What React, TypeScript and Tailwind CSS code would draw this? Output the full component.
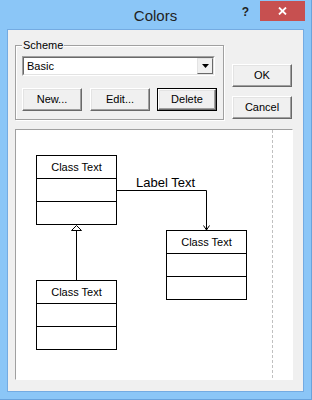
/* Colors dialog — Windows 8 style scheme editor */
const ui = "font-['Liberation_Sans',Arial,sans-serif]";

function Btn({ label, isDefault = false }: { label: string; isDefault?: boolean }) {
  return (
    <div
      className={`flex h-[23px] w-[60px] shrink-0 ${
        isDefault ? "border border-black" : ""
      }`}
    >
      <div className="flex h-full w-full items-center justify-center border border-t-white border-l-white border-r-[#696969] border-b-[#696969] bg-[#f0f0f0] text-[11px] leading-[13px] text-black shadow-[inset_-1px_-1px_0_#a0a0a0,inset_1px_1px_0_#e3e3e3]">
        {label}
      </div>
    </div>
  );
}

function ClassBox({ left, top }: { left: number; top: number }) {
  return (
    <div
      className="absolute flex w-[81px] flex-col border border-black bg-white"
      style={{ left, top }}
    >
      <div className="flex h-[22px] items-center justify-center text-[11px] leading-[13px] text-black">
        Class Text
      </div>
      <div className="h-[23px] border-t border-black" />
      <div className="h-[23px] border-t border-black" />
    </div>
  );
}

export default function App() {
  return (
    <div
      className={`${ui} flex h-[400px] w-[312px] flex-col overflow-hidden border-r border-b border-[#6aa3dc] bg-[#8bc6f7]`}
    >
      {/* Title bar */}
      <div className="grid h-[29px] shrink-0 grid-cols-[1fr_auto_1fr]">
        <div />
        <div className="mt-[7px] text-[15px] leading-[17px] text-[#222]">
          Colors
        </div>
        <div className="flex items-start justify-end pr-[6px]">
          <span className="mt-[5px] mr-[11px] text-[12px] font-bold leading-[14px] text-[#222]">
            ?
          </span>
          <div className="mt-[1px] flex h-[20px] w-[45px] items-center justify-center bg-[#c75050]">
            <svg width="9" height="8" viewBox="0 0 9 8">
              <path d="M1 0.5L8 7.5M8 0.5L1 7.5" stroke="white" strokeWidth="1.8" />
            </svg>
          </div>
        </div>
      </div>

      {/* Client area */}
      <div className="mx-[7px] flex h-[363px] shrink-0 flex-col border border-[#74abe2] bg-[#f0f0f0] pl-[7px]">
        <div className="flex">
          {/* Scheme group */}
          <div className="mt-[15px] flex h-[75px] w-[209px] flex-col border border-[#a0a0a0] shadow-[inset_1px_1px_0_#fff,1px_1px_0_#fff]">
            <div className="-mt-[7px] ml-[6px] h-[13px] w-fit bg-[#f0f0f0] px-[1px] text-[11px] leading-[13px] text-black">
              Scheme
            </div>
            <div className="ml-[6px] mt-[4px] flex h-[20px] w-[193px] border border-t-[#a0a0a0] border-l-[#a0a0a0] border-r-white border-b-white">
              <div className="flex flex-1 items-center border border-t-[#696969] border-l-[#696969] border-r-[#e3e3e3] border-b-[#e3e3e3] bg-white">
                <span className="flex-1 pl-[3px] text-[11px] leading-[13px] text-black">
                  Basic
                </span>
                <div className="flex h-full w-[16px] items-center justify-center border border-t-[#e3e3e3] border-l-[#e3e3e3] border-r-[#696969] border-b-[#696969] bg-[#f0f0f0]">
                  <svg width="7" height="4" viewBox="0 0 7 4">
                    <path d="M0 0H7L3.5 4Z" fill="black" />
                  </svg>
                </div>
              </div>
            </div>
            <div className="ml-[6px] mt-[12px] flex">
              <Btn label="New..." />
              <div className="ml-[8px]">
                <Btn label="Edit..." />
              </div>
              <div className="ml-[7px]">
                <Btn label="Delete" isDefault />
              </div>
            </div>
          </div>

          {/* OK / Cancel */}
          <div className="ml-[8px] mt-[34px] flex flex-col gap-[9px]">
            <Btn label="OK" />
            <Btn label="Cancel" />
          </div>
        </div>

        {/* Diagram canvas */}
        <div className="relative mt-[9px] h-[251px] w-[278px] overflow-hidden border border-t-[#a0a0a0] border-l-[#a0a0a0] border-r-white border-b-white bg-white">
          <svg className="absolute inset-0" width="276" height="249">
            <line x1="256.5" y1="0" x2="256.5" y2="249" stroke="#c0c0c0" strokeDasharray="3 2" />
            <path d="M101 60.5H190.5V100" stroke="black" fill="none" />
            <path d="M187.5 95.5L190.5 100L193.5 95.5" stroke="black" fill="none" />
            <path d="M60.5 100.5V150" stroke="black" />
            <polygon points="60.5,95.5 55.5,100.5 65.5,100.5" fill="white" stroke="black" />
          </svg>
          <ClassBox left={20} top={25} />
          <ClassBox left={150} top={100} />
          <ClassBox left={20} top={150} />
          <div className="absolute left-[120px] top-[45px] text-[13px] leading-[15px] text-black">
            Label Text
          </div>
        </div>
      </div>
    </div>
  );
}
